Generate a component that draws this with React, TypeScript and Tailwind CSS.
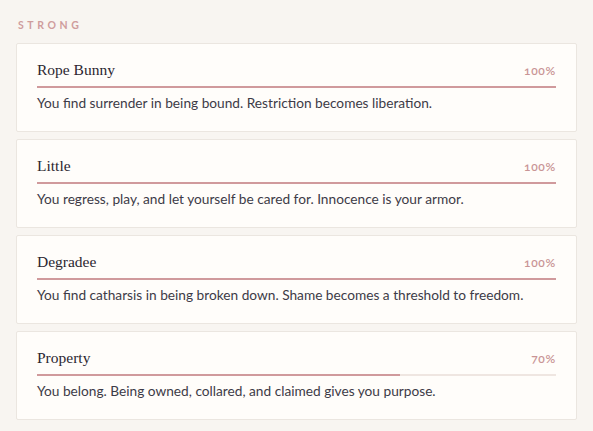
const ITEMS = [
  { name: 'Rope Bunny', pct: 100, text: 'You find surrender in being bound. Restriction becomes liberation.' },
  { name: 'Little', pct: 100, text: 'You regress, play, and let yourself be cared for. Innocence is your armor.' },
  { name: 'Degradee', pct: 100, text: 'You find catharsis in being broken down. Shame becomes a threshold to freedom.' },
  { name: 'Property', pct: 70, text: 'You belong. Being owned, collared, and claimed gives you purpose.' },
];

export default function App() {
  return (
    <div className="min-h-screen w-full bg-[#f8f5f1] px-4 pt-[18px] pb-4 font-['Lato',sans-serif]">
      <h2 className="pl-[2px] text-[10.5px] font-bold uppercase leading-[14px] tracking-[0.34em] text-[#cf9d9d]">
        Strong
      </h2>
      <div className="mt-[11px] flex flex-col gap-[7px]">
        {ITEMS.map((item) => (
          <div
            key={item.name}
            className="h-[89px] rounded-[2px] border border-[#ebe6e0] bg-[#fffdfa] px-5 pt-[15px]"
          >
            <div className="flex items-baseline justify-between">
              <h3 className="font-['Liberation_Serif',serif] text-[15.5px] leading-[22px] text-[#2b2630]">
                {item.name}
              </h3>
              <span className="text-[12px] font-semibold tracking-[0.06em] text-[#c99495] oldstyle-nums">
                {item.pct}%
              </span>
            </div>
            <div className="mt-[5px] h-[2px] w-full bg-[#efe6e1]">
              <div className="h-full bg-[#d09a9c]" style={{ width: `${item.pct}%` }} />
            </div>
            <p className="mt-[5px] text-[13.7px] leading-[20px] text-[#3d3b47]">{item.text}</p>
          </div>
        ))}
      </div>
    </div>
  );
}
